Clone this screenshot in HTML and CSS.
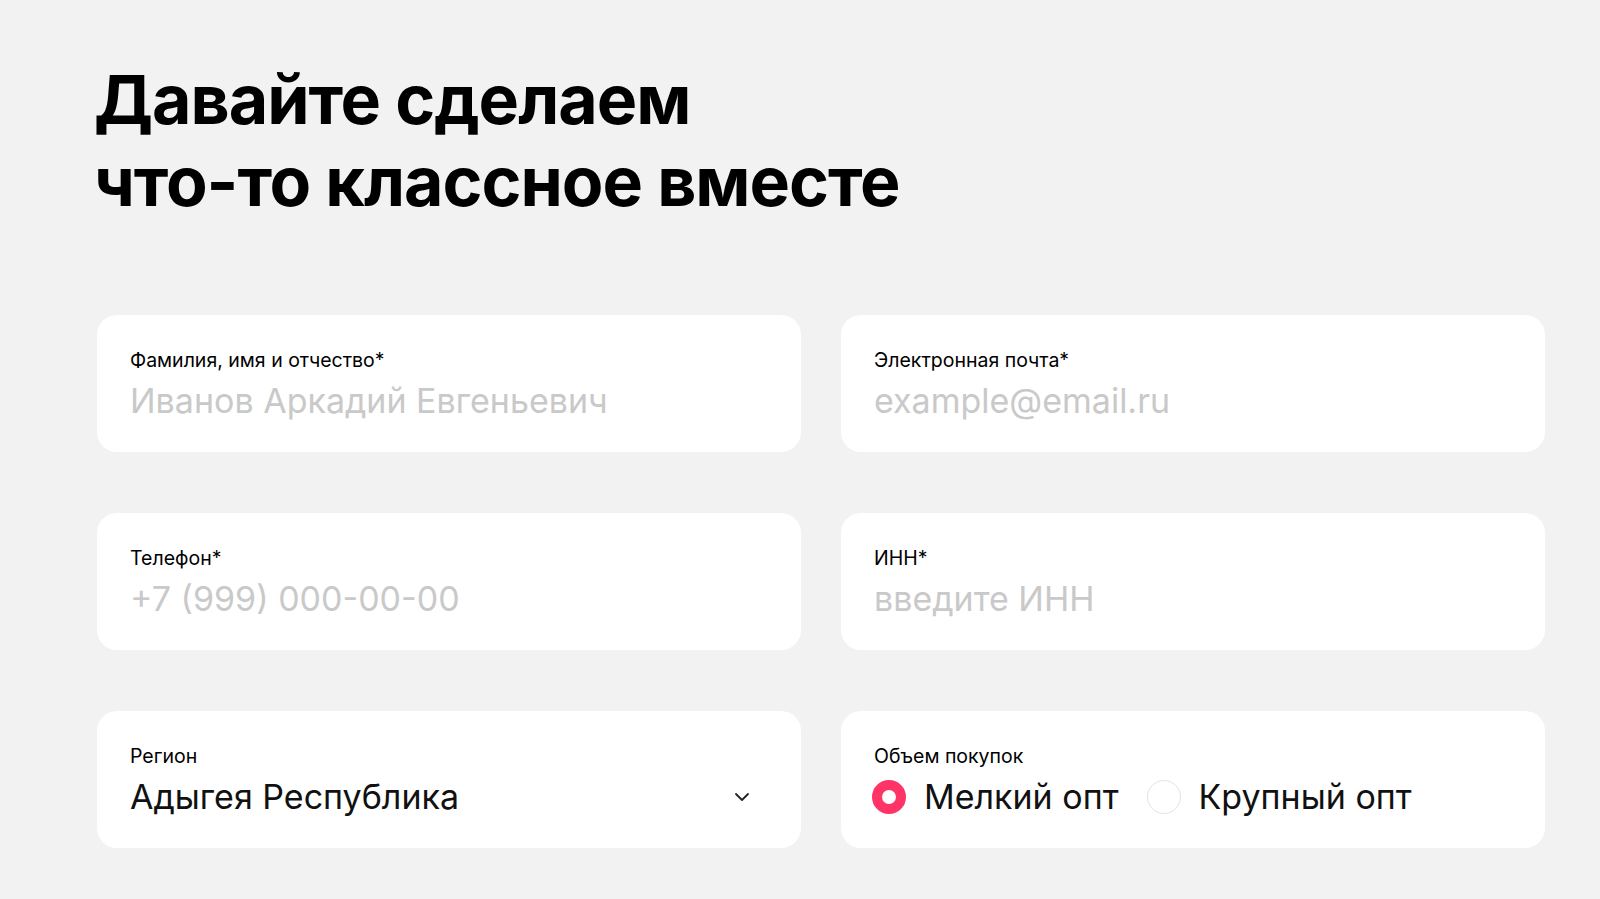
FILE: index.html
```html
<!DOCTYPE html>
<html lang="ru">
<head>
<meta charset="utf-8">
<title>Форма</title>
<link rel="stylesheet" href="styles.css">
</head>
<body>
<main class="page">
  <h1 class="title">Давайте сделаем<br>что-то классное вместе</h1>
  <form class="form">
    <label class="field">
      <span class="field-label">Фамилия, имя и отчество*</span>
      <span class="field-placeholder">Иванов Аркадий Евгеньевич</span>
    </label>
    <label class="field">
      <span class="field-label">Электронная почта*</span>
      <span class="field-placeholder">example@email.ru</span>
    </label>
    <label class="field">
      <span class="field-label">Телефон*</span>
      <span class="field-placeholder">+7 (999) 000-00-00</span>
    </label>
    <label class="field">
      <span class="field-label">ИНН*</span>
      <span class="field-placeholder">введите ИНН</span>
    </label>
    <div class="field">
      <span class="field-label">Регион</span>
      <div class="select-row">
        <span class="field-value">Адыгея Республика</span>
        <svg class="chevron" width="16" height="10" viewBox="0 0 16 10"><path d="M2 2 L8 8 L14 2" fill="none" stroke="#222" stroke-width="1.8" stroke-linecap="round" stroke-linejoin="round"/></svg>
      </div>
    </div>
    <div class="field">
      <span class="field-label">Объем покупок</span>
      <div class="radio-row">
        <span class="radio-option"><span class="radio radio-on"></span><span class="field-value">Мелкий опт</span></span>
        <span class="radio-option"><span class="radio"></span><span class="field-value">Крупный опт</span></span>
      </div>
    </div>
  </form>
</main>
</body>
</html>
```
FILE: styles.css
```css
html, body {
  margin: 0;
  padding: 0;
  background: #f2f2f2;
}
body {
  font-family: "Inter", "Noto Sans", sans-serif;
  color: #000;
}
.page {
  padding: 58px 55px 0 97px;
}
.title {
  margin: 0 0 0 -3px;
  font-family: "Inter", sans-serif;
  font-weight: 700;
  font-size: 68px;
  line-height: 82px;
  letter-spacing: -1px;
  color: #000;
}
.form {
  margin-top: 93px;
  display: grid;
  grid-template-columns: 1fr 1fr;
  column-gap: 40px;
  row-gap: 61px;
  width: 1448px;
}
.field {
  background: #fff;
  border-radius: 20px;
  height: 137px;
  box-sizing: border-box;
  padding: 34px 34px 0 33px;
  display: flex;
  flex-direction: column;
}
.field-label {
  font-size: 19.5px;
  line-height: 22px;
  color: #000;
}
.field-placeholder {
  margin-top: 10px;
  font-size: 34px;
  line-height: 40px;
  color: #c9c9c9;
}
.field-value {
  font-size: 34px;
  line-height: 40px;
  color: #111;
}
.select-row {
  margin-top: 10px;
  display: flex;
  align-items: center;
  justify-content: space-between;
  padding-right: 17px;
}
.chevron {
  display: block;
}
.radio-row {
  margin-top: 10px;
  margin-left: -2px;
  display: flex;
  align-items: center;
  gap: 28px;
}
.radio-option {
  display: flex;
  align-items: center;
  gap: 18px;
}
.radio {
  width: 34px;
  height: 34px;
  border-radius: 50%;
  box-sizing: border-box;
  border: 1px solid #e4e4e4;
  background: #fff;
}
.radio-on {
  border: 10px solid #ff3366;
}
```
